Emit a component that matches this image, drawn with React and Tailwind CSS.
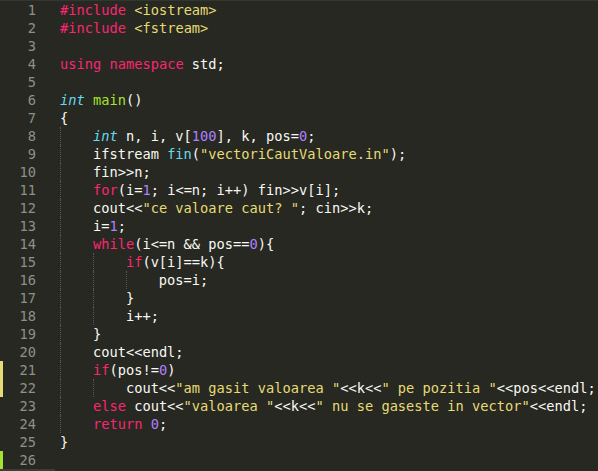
import React from "react";

const K = "text-[#F92672]";
const T = "text-[#66D9EF] italic";
const F = "text-[#A6E22E]";
const S = "text-[#E6DB74]";
const N = "text-[#AE81FF]";
const C = "text-[#66D9EF]";

// [indent, tokens, gutter marker]
const lines = [
    [0, [["#include", K], [" "], ["<iostream>", S]]],
    [0, [["#include", K], [" "], ["<fstream>", S]]],
    [0, []],
    [0, [["using", K], [" "], ["namespace", K], [" std;"]]],
    [0, []],
    [0, [["int", T], [" "], ["main", F], ["()"]]],
    [0, [["{"]]],
    [1, [["int", T], [" n, i, v["], ["100", N], ["], k, pos="], ["0", N], [";"]]],
    [1, [["ifstream "], ["fin", C], ["("], ['"vectoriCautValoare.in"', S], [");"]]],
    [1, [["fin>>n;"]]],
    [1, [["for", K], ["(i="], ["1", N], ["; i<=n; i++) fin>>v[i];"]]],
    [1, [["cout<<"], ['"ce valoare caut? "', S], ["; cin>>k;"]]],
    [1, [["i="], ["1", N], [";"]]],
    [1, [["while", K], ["(i<=n && pos=="], ["0", N], ["){"]]],
    [2, [["if", K], ["(v[i]==k){"]]],
    [3, [["pos=i;"]]],
    [2, [["}"]]],
    [2, [["i++;"]]],
    [1, [["}"]]],
    [1, [["cout<<endl;"]]],
    [1, [["if", K], ["(pos!="], ["0", N], [")"]], "mod"],
    [2, [["cout<<"], ['"am gasit valoarea "', S], ["<<k<<"], ['" pe pozitia "', S], ["<<pos<<endl;"]], "mod"],
    [1, [["else", K], [" cout<<"], ['"valoarea "', S], ["<<k<<"], ['" nu se gaseste in vector"', S], ["<<endl;"]]],
    [1, [["return", K], [" "], ["0", N], [";"]]],
    [0, [["}"]]],
    [0, [], "add"],
];

const markerClass = (m) => {
    if (m === "mod") return "border-[#E6DB74]";
    if (m === "add") return "border-[#A6E22E]";
    return "border-transparent";
};

const App = () => {
    return (
        <div
            className="w-[598px] h-[471px] overflow-hidden bg-[#272822] border-t border-[#34352f] text-[13.7px] leading-[18px] text-[#F8F8F2]"
            style={{ fontFamily: '"DejaVu Sans Mono", "Liberation Mono", monospace' }}
        >
            {lines.map(([indent, tokens, marker], i) => (
                <div key={i} className="flex h-[18px]">
                    <div className={"w-[60px] shrink-0 border-l-[3px] pr-[24px] text-right text-[#8F908A] " + markerClass(marker)}>
                        {i + 1}
                    </div>
                    <div className="flex">
                        {Array.from({ length: indent }).map((_, j) => (
                            <span key={j} className="w-[4ch] shrink-0 border-l border-dotted border-[#55564f]" />
                        ))}
                        <span className="whitespace-pre">
                            {tokens.map(([t, cls], j) => (
                                <span key={j} className={cls || ""}>{t}</span>
                            ))}
                        </span>
                    </div>
                </div>
            ))}
            <div className="w-[55px] h-[2px] bg-[#3c3d37]" />
        </div>
    );
};

export default App;
